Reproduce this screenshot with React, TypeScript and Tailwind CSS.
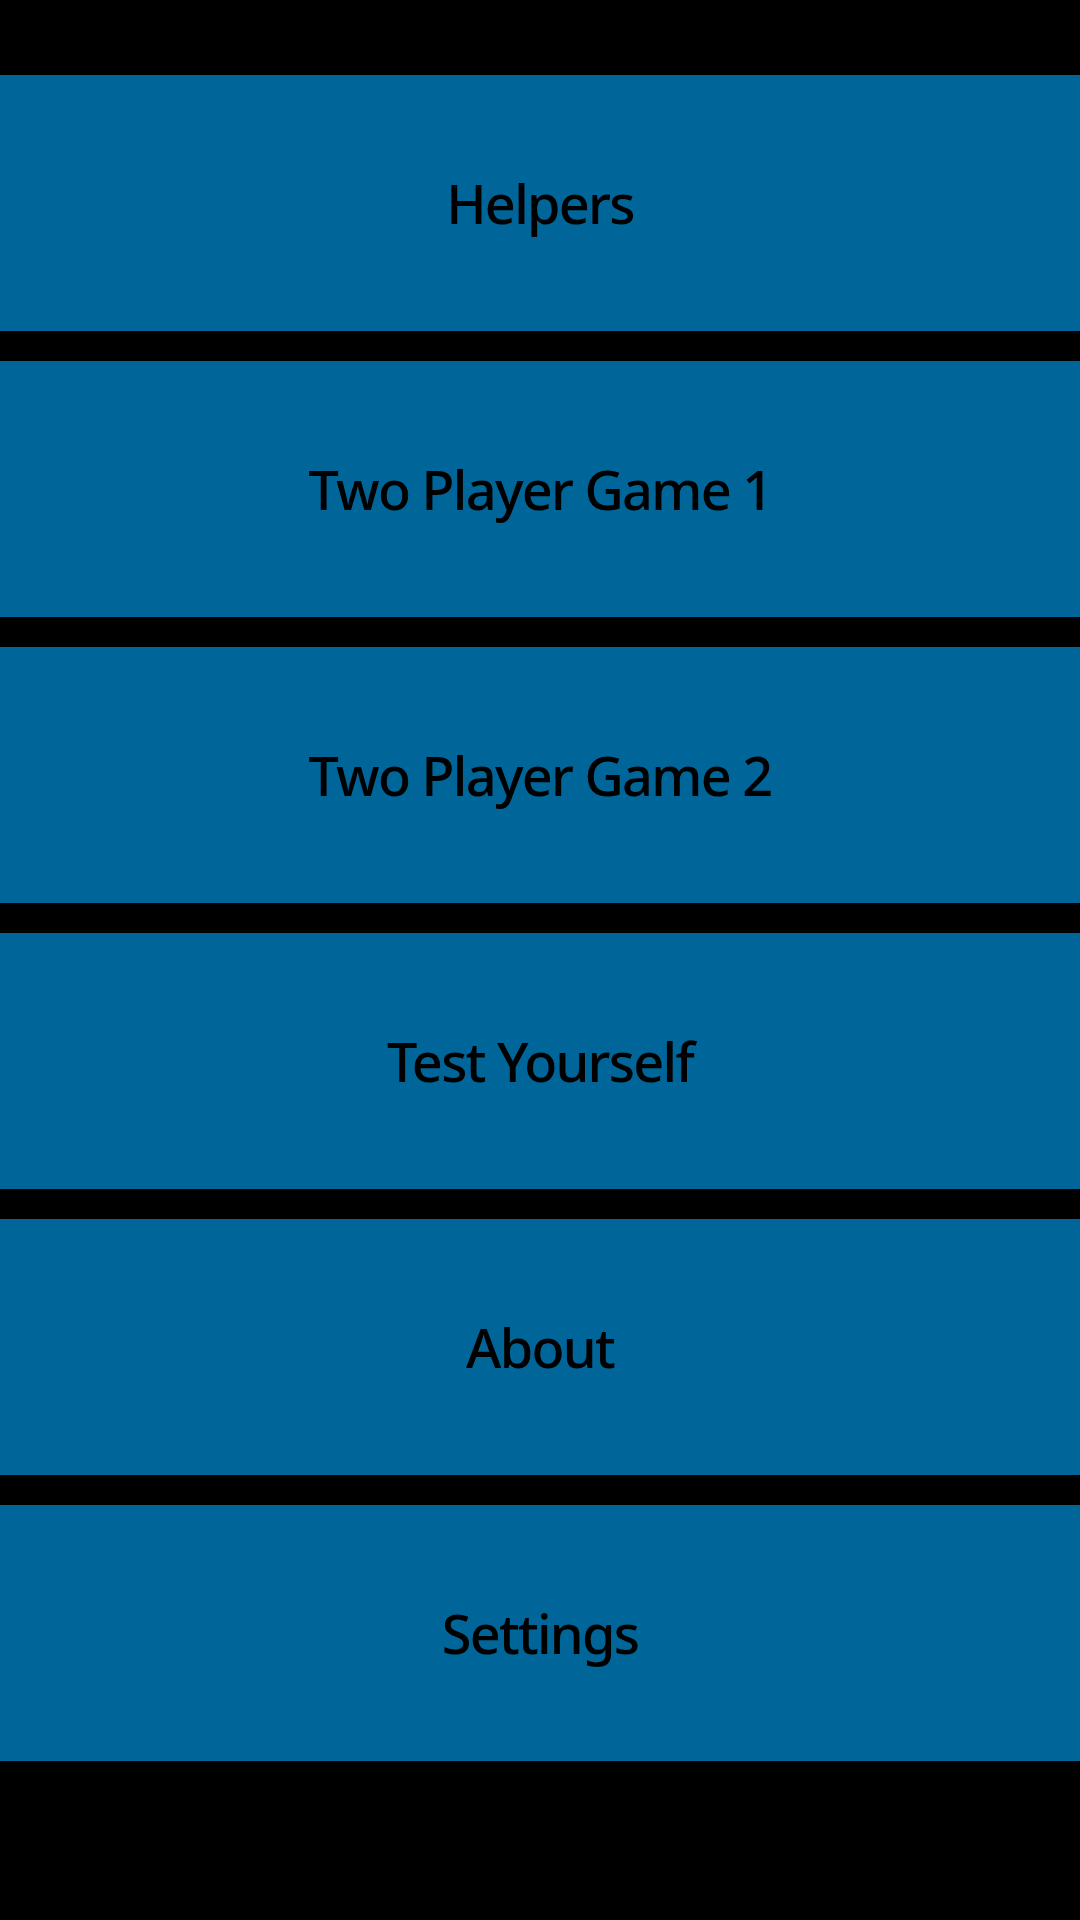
import React from 'react';

const items = ['Helpers', 'Two Player Game 1', 'Two Player Game 2', 'Test Yourself', 'About', 'Settings'];

const App: React.FC = () => {
  return (
    <div className="w-[1080px] h-[1920px] bg-black pt-[75px] flex flex-col gap-[30px]" style={{ fontFamily: '"Noto Sans", "Open Sans", sans-serif' }}>
      {items.map((label) => (
        <button
          key={label}
          className="w-full h-[256px] bg-[#006699] flex items-center justify-center text-black text-[54px] font-medium tracking-[-1.7px]"
        >
          {label}
        </button>
      ))}
    </div>
  );
};

export default App;
